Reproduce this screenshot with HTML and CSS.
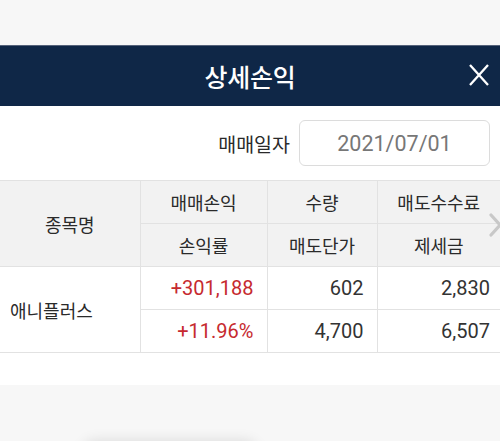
FILE: index.html
```html
<!DOCTYPE html>
<html lang="ko">
<head>
    <meta charset="UTF-8">
    <meta name="viewport" content="width=device-width, initial-scale=1.0">
    <title>상세손익</title>
    <link rel="stylesheet" href="styles.css">
</head>
<body>
    <div class="top-space"></div>
    <div class="popup">
        <div class="popup-header">
            <h1>상세손익</h1>
            <button class="close-btn" aria-label="닫기">
                <svg width="22" height="24" viewBox="0 0 22 24">
                    <path d="M2 2 L20 22 M20 2 L2 22" stroke="#fff" stroke-width="2.3" fill="none"/>
                </svg>
            </button>
        </div>
        <div class="date-row">
            <span class="date-label">매매일자</span>
            <div class="date-box">2021/07/01</div>
        </div>
        <div class="table-wrap">
            <table class="pl-table">
                <colgroup>
                    <col class="c1"><col class="c2"><col class="c3"><col class="c4">
                </colgroup>
                <thead>
                    <tr>
                        <th rowspan="2">종목명</th>
                        <th>매매손익</th>
                        <th>수량</th>
                        <th>매도수수료</th>
                    </tr>
                    <tr>
                        <th>손익률</th>
                        <th>매도단가</th>
                        <th>제세금</th>
                    </tr>
                </thead>
                <tbody>
                    <tr>
                        <td rowspan="2" class="name">애니플러스</td>
                        <td class="num up">+301,188</td>
                        <td class="num">602</td>
                        <td class="num last">2,830</td>
                    </tr>
                    <tr>
                        <td class="num up">+11.96%</td>
                        <td class="num">4,700</td>
                        <td class="num last">6,507</td>
                    </tr>
                </tbody>
            </table>
            <svg class="more-arrow" width="14" height="24" viewBox="0 0 14 24">
                <path d="M2 2 L11 12 L2 22" stroke="#c8c8c8" stroke-width="3.2" stroke-linecap="round" stroke-linejoin="round" fill="none"/>
            </svg>
        </div>
    </div>
    <div class="bottom-area">
        <div class="toast-shadow"></div>
    </div>
</body>
</html>
```

FILE: styles.css
```css
html, body {
    margin: 0;
    padding: 0;
}
body {
    width: 500px;
    height: 441px;
    overflow: hidden;
    background-color: #f7f7f7;
    font-family: "Noto Sans CJK KR", "Noto Sans", sans-serif;
    color: #333;
}
.top-space {
    height: 45px;
}
.popup {
    background: #fff;
    padding-bottom: 32px;
}
.popup-header {
    height: 61px;
    background: #0f2747;
    border-top: 1px solid #55627a;
    box-sizing: border-box;
    display: flex;
    align-items: center;
    justify-content: center;
    position: relative;
}
.popup-header h1 {
    margin: 0;
    color: #fff;
    font-size: 25px;
    font-weight: 500;
    letter-spacing: -0.3px;
}
.close-btn {
    position: absolute;
    right: 10px;
    top: 17px;
    width: 22px;
    height: 24px;
    padding: 0;
    border: none;
    background: none;
    display: flex;
}
.date-row {
    display: flex;
    justify-content: flex-end;
    align-items: center;
    gap: 9px;
    padding: 14px 10px 14px 0;
    border-top: 1px solid #e4e4e4;
    margin-top: -1px;
}
.date-label {
    font-size: 19.5px;
    color: #2a2a2a;
}
.date-box {
    width: 191px;
    height: 46px;
    box-sizing: border-box;
    border: 1px solid #dcdcdc;
    border-radius: 6px;
    display: flex;
    align-items: center;
    justify-content: center;
    font-family: Roboto, "Noto Sans CJK KR", sans-serif;
    font-size: 21.5px;
    color: #777;
}
.table-wrap {
    position: relative;
}
.pl-table {
    width: 500px;
    border-collapse: collapse;
    table-layout: fixed;
}
.c1 { width: 140px; }
.c2 { width: 127px; }
.c3 { width: 110px; }
.c4 { width: 123px; }
.pl-table th,
.pl-table td {
    height: 43px;
    padding: 0;
    border: 1px solid #e2e2e2;
    box-sizing: border-box;
}
.pl-table tr > :last-child {
    border-right: none;
}
.pl-table th:first-child {
    border-left: none;
}
.pl-table th {
    background: #f2f2f2;
    font-weight: 400;
    font-size: 18px;
    color: #2a2a2a;
    text-align: center;
}
.pl-table td.name {
    border-left: none;
    text-align: left;
    padding-left: 10px;
    font-size: 18px;
    color: #2a2a2a;
}
.pl-table td.num {
    text-align: right;
    padding-right: 13px;
    font-family: Roboto, "Noto Sans CJK KR", sans-serif;
    font-size: 20px;
    color: #333;
}
.pl-table td.num.last {
    padding-right: 10px;
    border-right: none;
}
.pl-table td.up {
    color: #c62a2f;
}
.more-arrow {
    position: absolute;
    right: -3px;
    top: 33px;
}
.bottom-area {
    height: 56px;
    overflow: hidden;
    display: flow-root;
}
.toast-shadow {
    margin: 58px 0 0 85px;
    width: 170px;
    height: 20px;
    border-radius: 10px;
    background: #e6e6e6;
    box-shadow: 0 0 14px 2px rgba(0, 0, 0, 0.12);
}
```
